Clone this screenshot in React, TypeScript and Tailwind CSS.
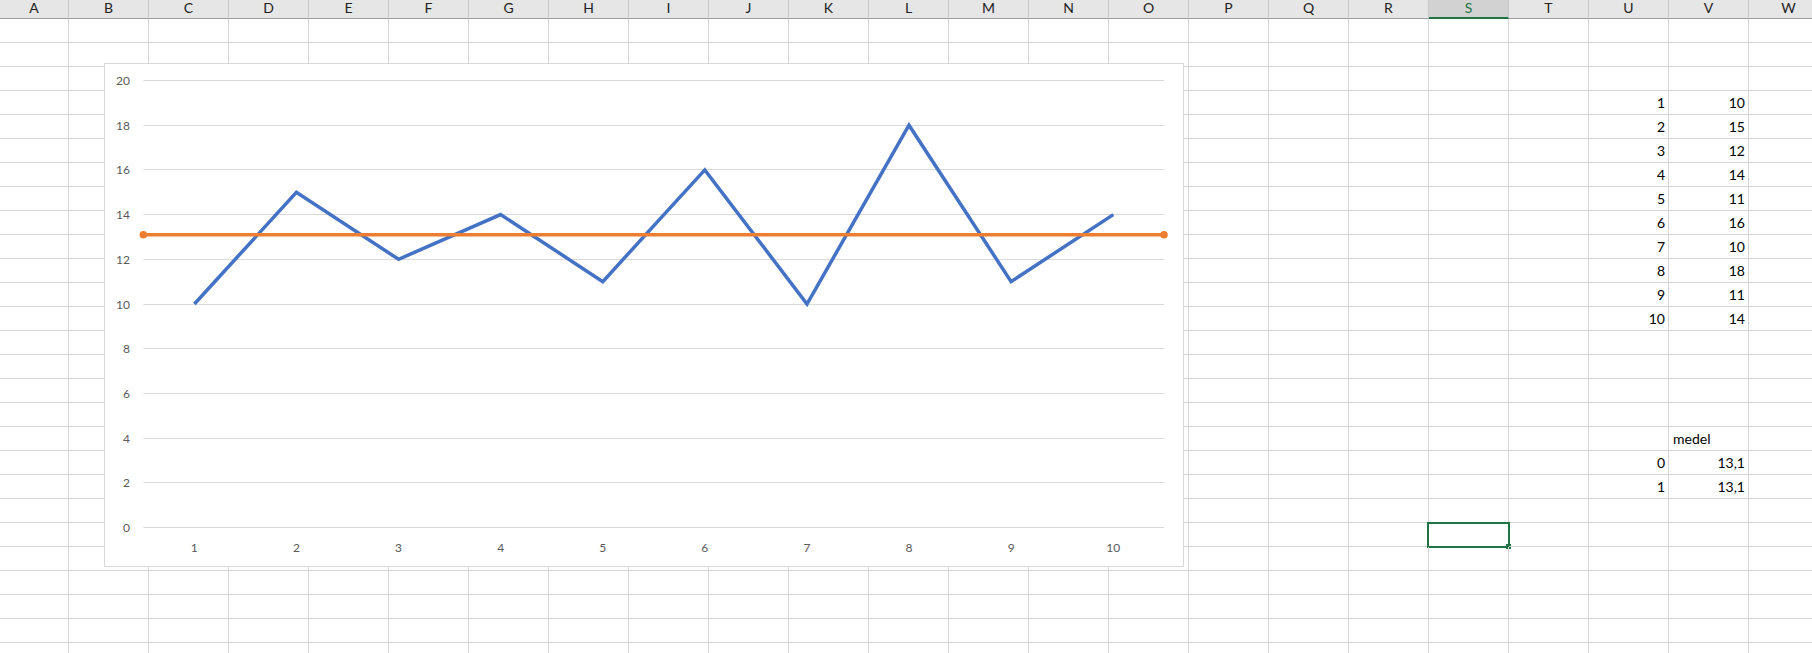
import React from "react";

const COLS = "ABCDEFGHIJKLMNOPQRSTUVW".split("");
const ROW_COUNT = 27;
const ACTIVE_COL = "S";
const ACTIVE_ROW = 21;

const values = [10, 15, 12, 14, 11, 16, 10, 18, 11, 14];
const mean = 13.1;

type Cell = { t: string; left?: boolean };
const cells: Record<string, Cell> = {};
values.forEach((v, i) => {
  cells[`${3 + i}-U`] = { t: String(i + 1) };
  cells[`${3 + i}-V`] = { t: String(v) };
});
cells["17-V"] = { t: "medel", left: true };
cells["18-U"] = { t: "0" };
cells["18-V"] = { t: "13,1" };
cells["19-U"] = { t: "1" };
cells["19-V"] = { t: "13,1" };

// plot geometry, in page pixels
const PL = 143.3;
const PR = 1164.3;
const STEP = (PR - PL) / values.length;
const yOf = (v: number) => 527.5 - v * 22.35;
const xOf = (i: number) => PL + STEP * (i + 0.5);

function LineChart() {
  const ticks = [0, 2, 4, 6, 8, 10, 12, 14, 16, 18, 20];
  const pts = values.map((v, i) => `${xOf(i).toFixed(1)},${yOf(v).toFixed(1)}`).join(" ");
  const my = yOf(mean);
  return (
    <div className="absolute left-[104px] top-[63px] w-[1080px] h-[504px] border border-[#d9d9d9] bg-white">
      <svg width={1078} height={502} className="block">
        <g transform="translate(-105 -64)" fontFamily="Lato, 'Open Sans', sans-serif" fontSize={12} fill="#595959">
          {ticks.map((t) => {
            const y = Math.floor(yOf(t)) + 0.5;
            return (
              <g key={t}>
                <line x1={PL} x2={PR} y1={y} y2={y} stroke="#d9d9d9" strokeWidth={1} />
                <text x={130} y={y} textAnchor="end" dominantBaseline="central">
                  {t}
                </text>
              </g>
            );
          })}
          {values.map((_, i) => (
            <text key={i} x={xOf(i)} y={547} textAnchor="middle" dominantBaseline="central">
              {i + 1}
            </text>
          ))}
          <polyline
            points={pts}
            fill="none"
            stroke="#4472c4"
            strokeWidth={3.5}
            strokeLinejoin="miter"
            strokeLinecap="butt"
          />
          <line x1={PL} x2={PR - 0.3} y1={my} y2={my} stroke="#ed7d31" strokeWidth={3.5} />
          <circle cx={PL} cy={my} r={3.8} fill="#ed7d31" />
          <circle cx={PR - 0.3} cy={my} r={3.8} fill="#ed7d31" />
        </g>
      </svg>
    </div>
  );
}

export default function App() {
  return (
    <div
      className="relative w-[1812px] h-[653px] overflow-hidden bg-white text-[14px] text-black"
      style={{ fontFamily: "Lato, 'Open Sans', sans-serif" }}
    >
      {/* column headers */}
      <div className="grid grid-cols-[69px_repeat(22,80px)] h-[19px]">
        {COLS.map((c) =>
          c === ACTIVE_COL ? (
            <div
              key={c}
              className="flex items-center justify-center pb-[1px] bg-[#d2d2d2] text-[#217346] border-r border-r-[#c6c6c6] border-b-2 border-b-[#217346] leading-none"
            >
              {c}
            </div>
          ) : (
            <div
              key={c}
              className="flex items-center justify-center pb-[2px] bg-[#e6e6e6] text-[#222222] border-r border-r-[#c6c6c6] border-b border-b-[#9e9e9e] leading-none"
            >
              {c}
            </div>
          )
        )}
      </div>

      {/* cell grid */}
      <div className="grid grid-cols-[69px_repeat(22,80px)]">
        {Array.from({ length: ROW_COUNT }).map((_, r) =>
          COLS.map((c) => {
            const cell = cells[`${r}-${c}`];
            const active = r === ACTIVE_ROW && c === ACTIVE_COL;
            return (
              <div
                key={`${r}-${c}`}
                className={`relative h-[24px] border-r border-b border-[#d4d4d4] flex items-center pt-[1px] leading-none whitespace-nowrap ${
                  cell?.left ? "justify-start pl-[4px]" : "justify-end pr-[3px]"
                }`}
              >
                {cell?.t}
                {active && (
                  <>
                    <div className="absolute -left-[2px] -top-[1px] w-[83px] h-[26px] border-2 border-[#217346]" />
                    <div className="absolute left-[77px] top-[21px] w-[5px] h-[5px] bg-[#217346]" />
                  </>
                )}
              </div>
            );
          })
        )}
      </div>

      <LineChart />
    </div>
  );
}
